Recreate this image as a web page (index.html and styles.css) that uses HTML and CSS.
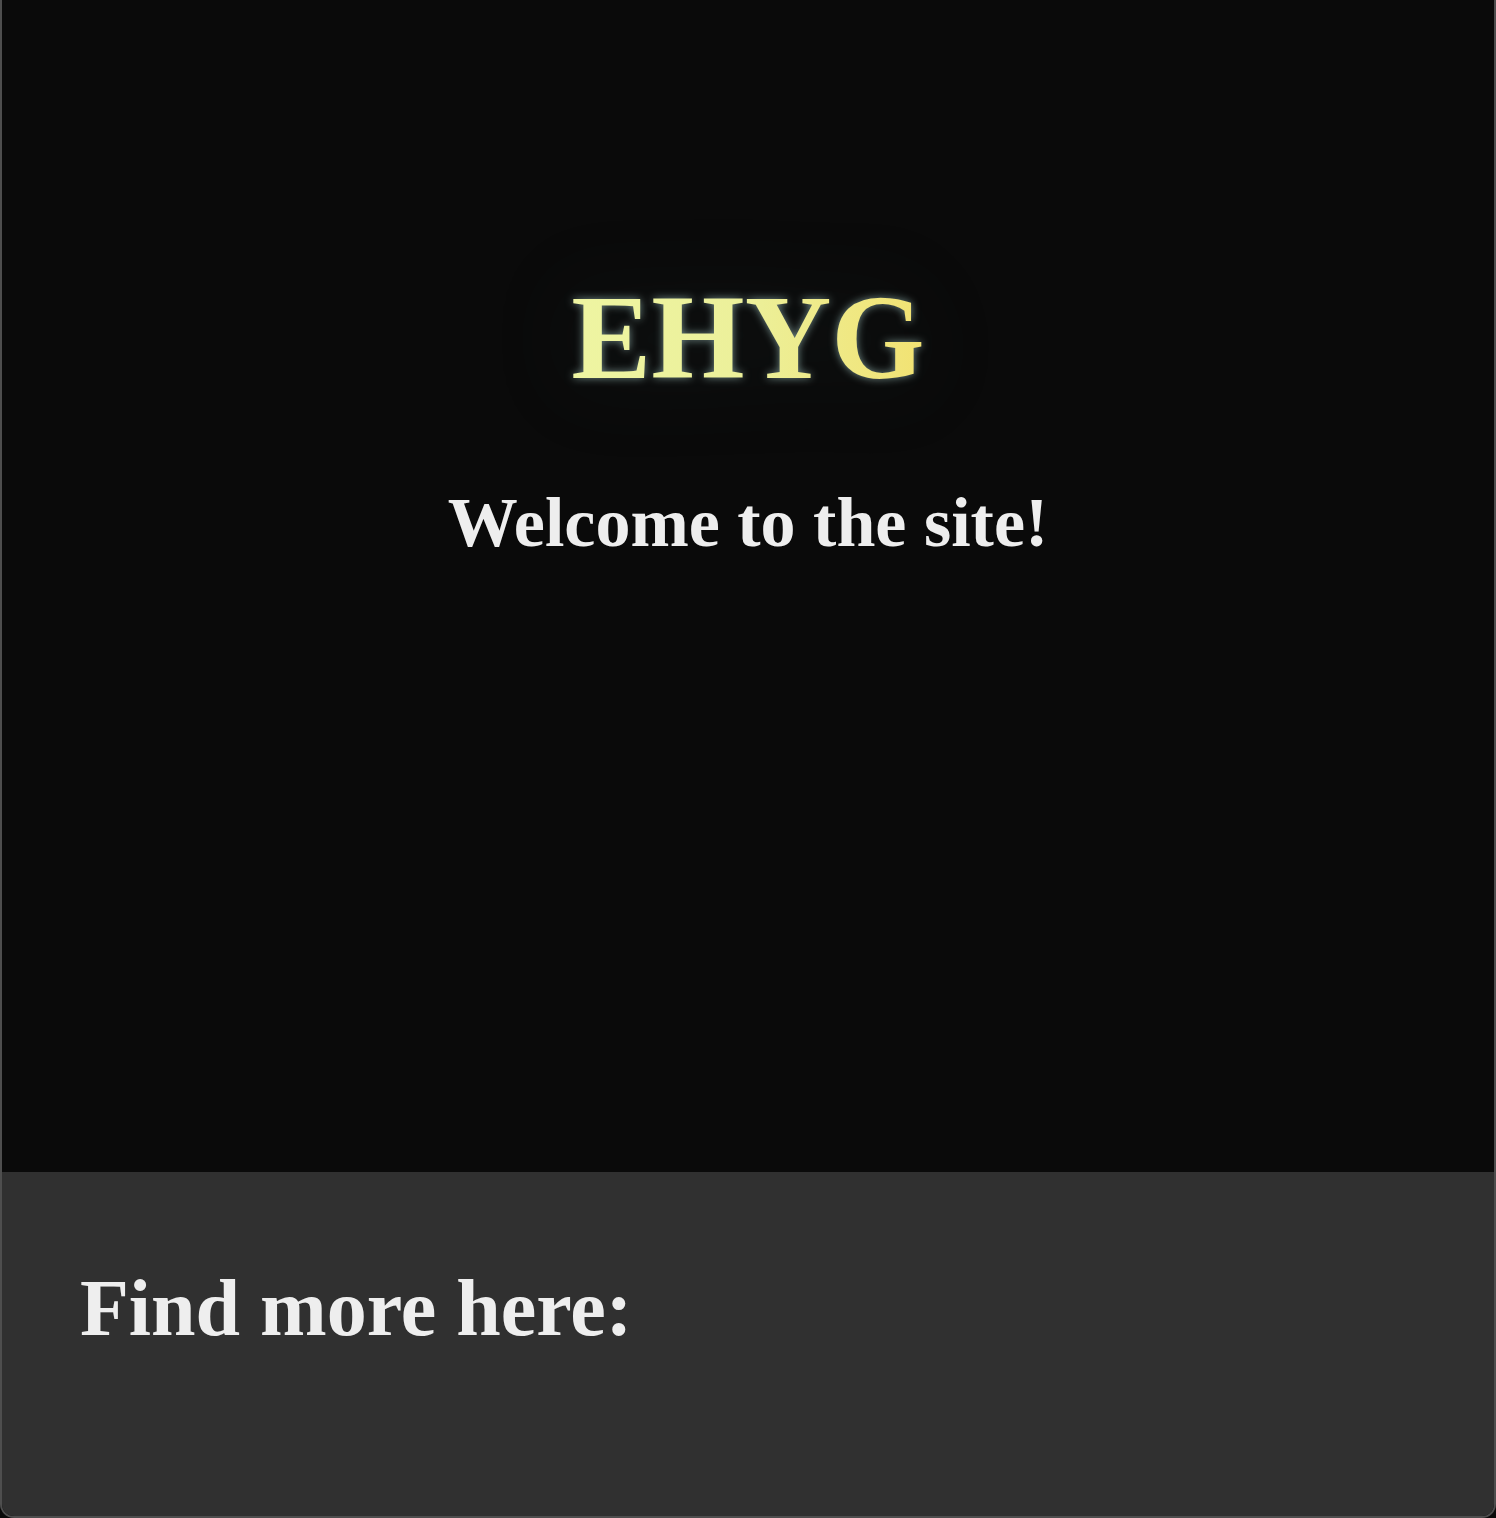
FILE: index.html
```html
<!DOCTYPE html>
<html lang="en">
<head>
<meta charset="utf-8">
<title>EHYG</title>
<link rel="stylesheet" href="styles.css">
</head>
<body>
<div class="page">
  <main class="hero">
    <h1 class="logo">EHYG</h1>
    <h2 class="welcome">Welcome to the site!</h2>
  </main>
  <footer class="footer">
    <h2 class="find">Find more here:</h2>
  </footer>
</div>
</body>
</html>
```
FILE: styles.css
```css
* { box-sizing: border-box; }
html, body { margin: 0; padding: 0; background: #0a0a0a; }
body { font-family: "Liberation Serif", "Times New Roman", serif; color: #eeeeee; }
.page {
  height: 100vh;
  display: flex;
  flex-direction: column;
  border: 2px solid #4e4e4e;
  border-top: none;
  border-radius: 0 0 14px 14px;
  overflow: hidden;
  background: #0a0a0a;
}
.hero {
  flex: 1;
  display: flex;
  flex-direction: column;
  align-items: center;
  padding-top: 278px;
}
.logo {
  margin: 0;
  font-size: 120px;
  line-height: 1;
  font-weight: bold;
  background: linear-gradient(90deg, #eef5a2 0%, #ecf09a 50%, #f2e272 100%);
  -webkit-background-clip: text;
  background-clip: text;
  color: transparent;
  filter: drop-shadow(0 0 4px rgba(185, 225, 220, 0.6)) drop-shadow(0 0 40px rgba(50, 75, 75, 0.18));
}
.welcome {
  margin: 90px 0 0;
  font-size: 70px;
  line-height: 1;
  font-weight: bold;
  color: #eeeeee;
}
.footer {
  height: 344px;
  flex: none;
  background: #303030;
  padding: 96px 0 0 78px;
}
.find {
  margin: 0;
  font-size: 80px;
  line-height: 1;
  font-weight: bold;
  color: #eeeeee;
}
```
